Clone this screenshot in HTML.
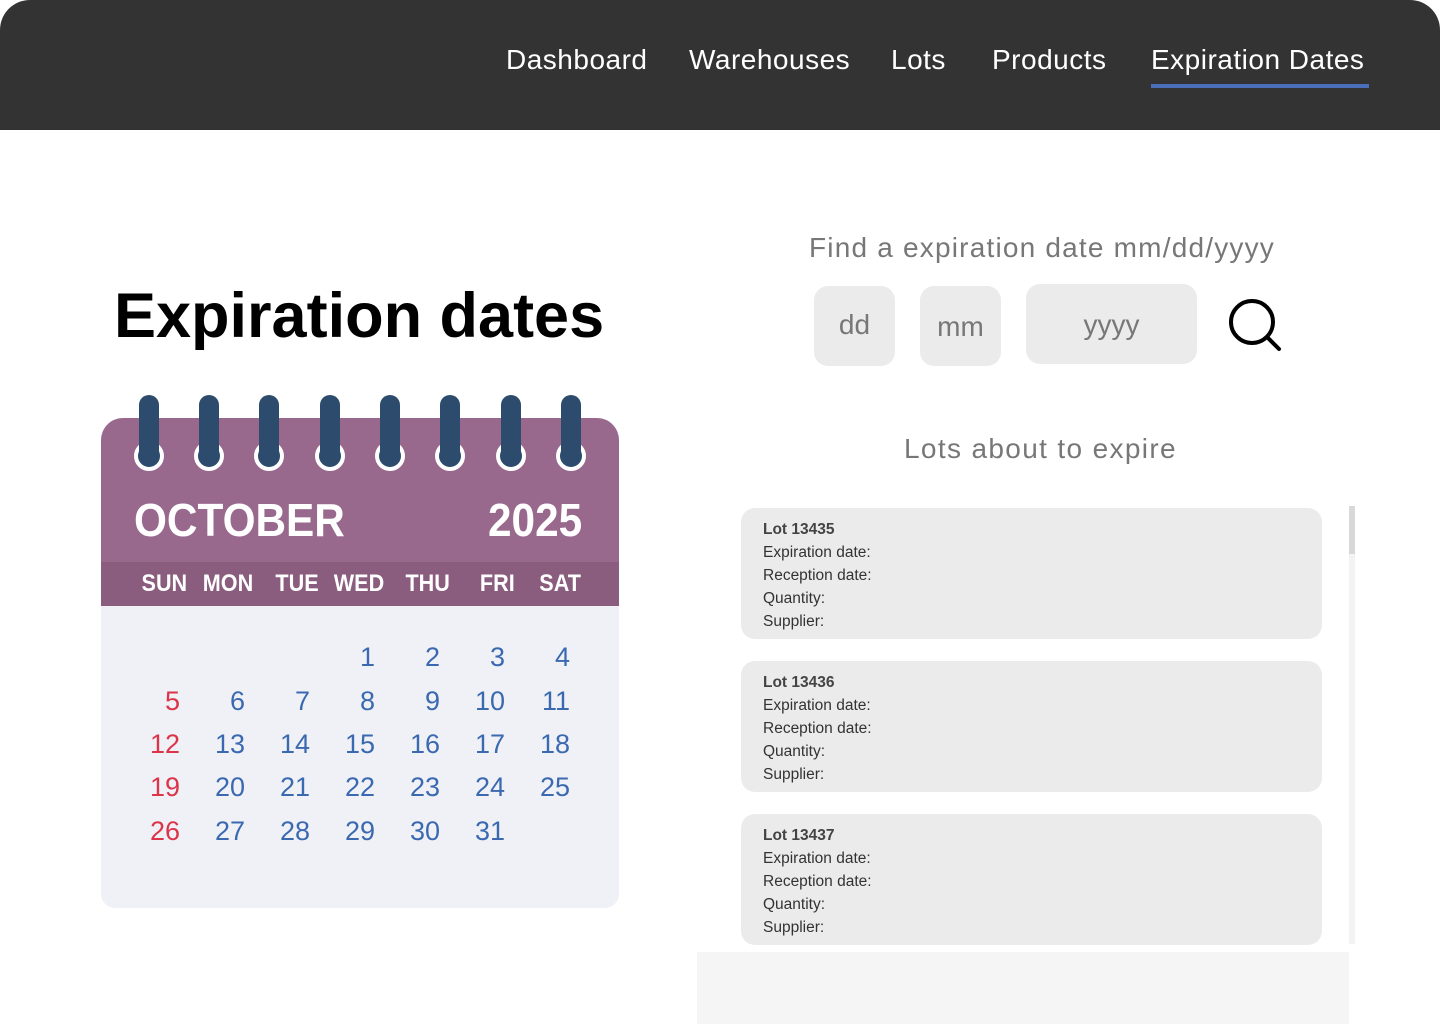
<!DOCTYPE html>
<html><head><meta charset="utf-8"><style>
*{margin:0;padding:0;box-sizing:border-box}
body{width:1440px;height:1024px;background:#fff;position:relative;overflow:hidden;font-family:"Liberation Sans",sans-serif}
.nav{position:absolute;left:0;top:0;width:1440px;height:130px;background:#333;border-radius:30px 30px 0 0}
.nav a{position:absolute;top:44px;color:#fff;font-size:28px;text-decoration:none;letter-spacing:0.5px;white-space:nowrap}
.ul{position:absolute;left:1151px;top:84px;width:218px;height:4px;background:#4a6fb8}
.abs{position:absolute}
h1{position:absolute;left:114px;top:280px;font-size:63px;font-weight:bold;color:#000;white-space:nowrap}
.cal-h{position:absolute;left:101px;top:418px;width:518px;height:145px;background:#98698d;border-radius:22px 22px 0 0}
.cal-d{position:absolute;left:101px;top:562px;width:518px;height:45px;background:#8a5c7e}
.cal-b{position:absolute;left:101px;top:606px;width:518px;height:302px;background:#eff1f7;border-radius:0 0 14px 14px}
.ring{position:absolute;top:441px;width:30px;height:30px;border-radius:50%;border:4px solid #fff;background:#2d4b6d}
.bar{position:absolute;top:395px;width:20px;height:70px;border-radius:10px;background:#2d4b6d}
.mo{position:absolute;color:#fff;font-weight:bold;font-size:46px;top:493px;transform:scaleX(.92);transform-origin:left}
.dn{position:absolute;top:570px;color:#fff;font-weight:bold;font-size:24px;transform:scaleX(.9)}
.n{position:absolute;width:60px;text-align:right;font-size:27px;color:#3b69b0}
.r{color:#dc3449}
.lbl{position:absolute;color:#777;font-size:28px;white-space:nowrap}
.box{position:absolute;background:#ebebeb;border-radius:14px;color:#777;font-size:28px;text-align:center}
.card{position:absolute;left:741px;width:581px;height:131px;background:#ebebeb;border-radius:14px;padding:10px 22px;font-size:15.5px;color:#333;line-height:23px}
.card b{font-weight:bold;color:#444}
</style></head><body>
<div class="nav">
<a style="left:506px">Dashboard</a>
<a style="left:689px">Warehouses</a>
<a style="left:891px">Lots</a>
<a style="left:992px">Products</a>
<a style="left:1151px">Expiration Dates</a>
<div class="ul"></div>
</div>
<h1>Expiration dates</h1>

<div class="cal-h"></div><div class="cal-d"></div><div class="cal-b"></div>
<div class="ring" style="left:134px"></div><div class="ring" style="left:194px"></div><div class="ring" style="left:254px"></div><div class="ring" style="left:315px"></div><div class="ring" style="left:375px"></div><div class="ring" style="left:435px"></div><div class="ring" style="left:496px"></div><div class="ring" style="left:556px"></div>
<div class="bar" style="left:139px"></div><div class="bar" style="left:199px"></div><div class="bar" style="left:259px"></div><div class="bar" style="left:320px"></div><div class="bar" style="left:380px"></div><div class="bar" style="left:440px"></div><div class="bar" style="left:501px"></div><div class="bar" style="left:561px"></div>
<div class="mo" style="left:134px">OCTOBER</div>
<div class="mo" style="left:488px">2025</div>
<div class="dn" style="left:139px">SUN</div><div class="dn" style="left:200px">MON</div><div class="dn" style="left:273px">TUE</div><div class="dn" style="left:331px">WED</div><div class="dn" style="left:403px">THU</div><div class="dn" style="left:478px">FRI</div><div class="dn" style="left:537px">SAT</div>

<div class="n" style="left:315px;top:642px">1</div><div class="n" style="left:380px;top:642px">2</div><div class="n" style="left:445px;top:642px">3</div><div class="n" style="left:510px;top:642px">4</div>
<div class="n r" style="left:120px;top:686px">5</div><div class="n" style="left:185px;top:686px">6</div><div class="n" style="left:250px;top:686px">7</div><div class="n" style="left:315px;top:686px">8</div><div class="n" style="left:380px;top:686px">9</div><div class="n" style="left:445px;top:686px">10</div><div class="n" style="left:510px;top:686px">11</div>
<div class="n r" style="left:120px;top:729px">12</div><div class="n" style="left:185px;top:729px">13</div><div class="n" style="left:250px;top:729px">14</div><div class="n" style="left:315px;top:729px">15</div><div class="n" style="left:380px;top:729px">16</div><div class="n" style="left:445px;top:729px">17</div><div class="n" style="left:510px;top:729px">18</div>
<div class="n r" style="left:120px;top:772px">19</div><div class="n" style="left:185px;top:772px">20</div><div class="n" style="left:250px;top:772px">21</div><div class="n" style="left:315px;top:772px">22</div><div class="n" style="left:380px;top:772px">23</div><div class="n" style="left:445px;top:772px">24</div><div class="n" style="left:510px;top:772px">25</div>
<div class="n r" style="left:120px;top:816px">26</div><div class="n" style="left:185px;top:816px">27</div><div class="n" style="left:250px;top:816px">28</div><div class="n" style="left:315px;top:816px">29</div><div class="n" style="left:380px;top:816px">30</div><div class="n" style="left:445px;top:816px">31</div>

<div class="lbl" style="left:809px;top:232px;letter-spacing:1.2px">Find a expiration date mm/dd/yyyy</div>
<div class="box" style="left:814px;top:286px;width:81px;height:80px;line-height:78px">dd</div>
<div class="box" style="left:920px;top:286px;width:81px;height:80px;line-height:82px">mm</div>
<div class="box" style="left:1026px;top:284px;width:171px;height:80px;line-height:82px">yyyy</div>
<svg class="abs" style="left:1226px;top:297px" width="60" height="60" viewBox="0 0 60 60"><circle cx="26" cy="25" r="21" fill="none" stroke="#000" stroke-width="4"/><line x1="41" y1="40" x2="53" y2="52" stroke="#000" stroke-width="4" stroke-linecap="round"/></svg>

<div class="lbl" style="left:904px;top:433px;letter-spacing:1.35px">Lots about to expire</div>

<div class="abs" style="left:1349px;top:506px;width:6px;height:438px;background:#f3f3f3"></div>
<div class="abs" style="left:1349px;top:506px;width:6px;height:48px;background:#d8d8d8"></div>
<div class="card" style="top:508px"><b>Lot 13435</b><br>Expiration date:<br>Reception date:<br>Quantity:<br>Supplier:</div>
<div class="card" style="top:661px"><b>Lot 13436</b><br>Expiration date:<br>Reception date:<br>Quantity:<br>Supplier:</div>
<div class="card" style="top:814px"><b>Lot 13437</b><br>Expiration date:<br>Reception date:<br>Quantity:<br>Supplier:</div>
<div class="abs" style="left:697px;top:952px;width:652px;height:72px;background:#f5f5f5"></div>
</body></html>
